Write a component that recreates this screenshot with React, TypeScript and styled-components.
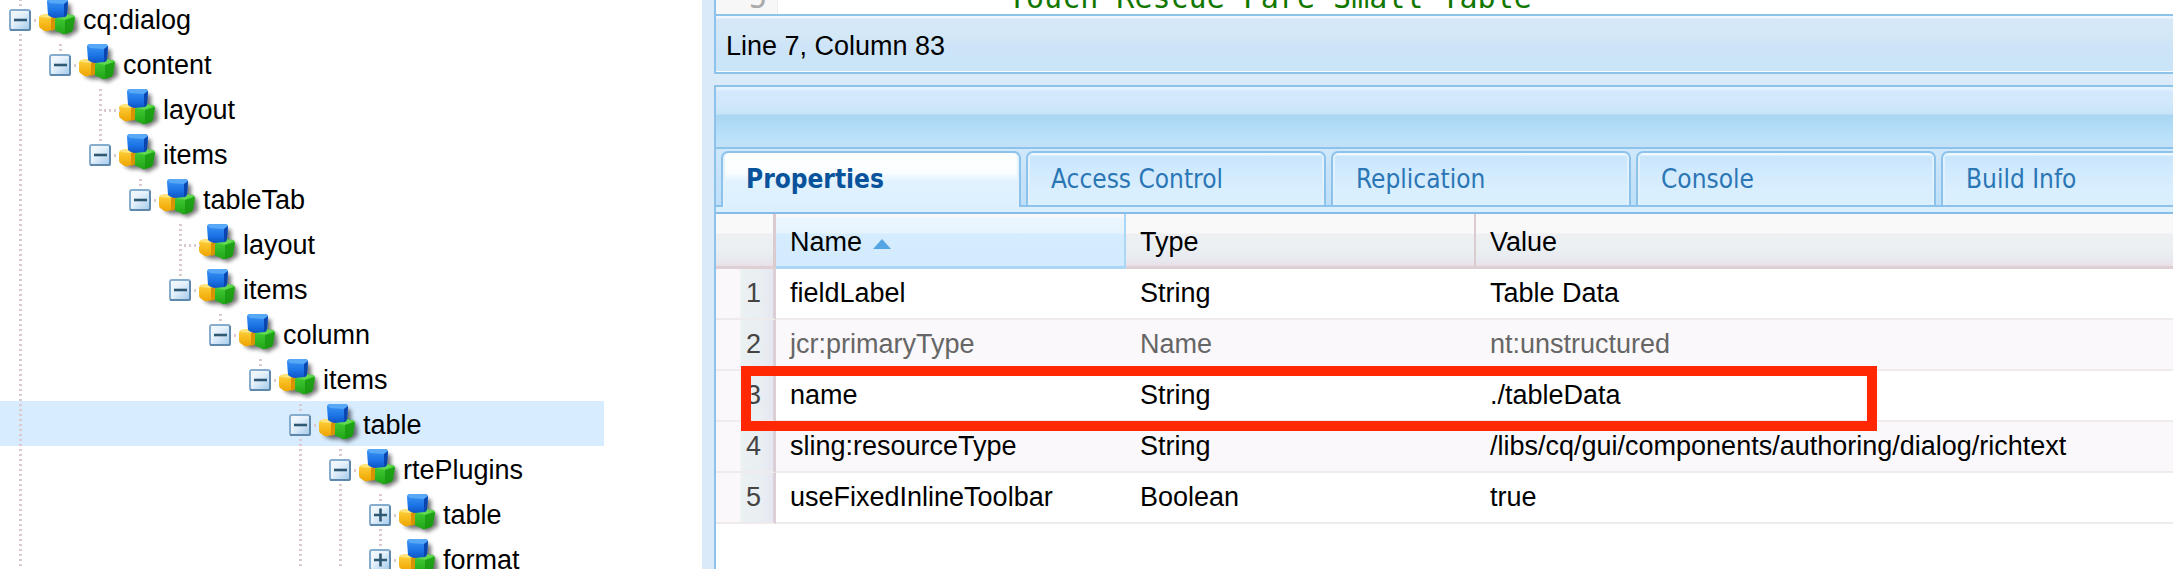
import React from "react";
import styled, { createGlobalStyle, css } from "styled-components";

const sans = '"Liberation Sans", Arial, Helvetica, sans-serif';
const tabFont = '"DejaVu Sans Condensed", "DejaVu Sans", Tahoma, sans-serif';
const mono = '"DejaVu Sans Mono", Menlo, monospace';
const frame = "#8dc2ea";

const GlobalStyle = createGlobalStyle`
  * { box-sizing: border-box; }
  html, body { margin: 0; background: #fff; }
  body { font-family: ${sans}; font-size: 27px; color: #000; }
`;

const Page = styled.div`
  display: flex;
  height: 100vh;
  overflow: hidden;
`;

/* ---------- Repository tree ---------- */

const TreePanel = styled.nav`
  flex: none;
  width: 702px;
  overflow: hidden;
`;

const Tree = styled.ul`
  list-style: none;
  margin: -4px 98px 0 0;
  padding: 0;
`;

const TreeRow = styled.li<{ $selected?: boolean }>`
  display: flex;
  height: 45px;
  background: ${(p) => (p.$selected ? "#d7ecfe" : "transparent")};
`;

const GuideCell = styled.span`
  position: relative;
  flex: none;
  display: flex;
  align-items: center;
  justify-content: center;
  width: 40px;
  height: 45px;
  padding-top: 3px;
`;

const GuideLines = styled.svg`
  position: absolute;
  inset: 0;
`;

const Toggle = styled.button`
  position: relative;
  display: block;
  width: 24px;
  height: 24px;
  padding: 0;
  border: 0;
  background: none;

  svg { display: block; }
`;

const NodeIcon = styled.svg`
  flex: none;
  margin-top: 3px;
`;

const NodeLabel = styled.span`
  line-height: 45px;
  padding-top: 2px;
  height: 45px;
  white-space: nowrap;
`;

type Guide = "blank" | "line";

interface TreeNode {
  label: string;
  guides: Guide[];
  toggle?: "minus" | "plus";
  last?: boolean;
  selected?: boolean;
}

const line = "line" as const;
const blank = "blank" as const;

const nodes: TreeNode[] = [
  { label: "cq:dialog", guides: [], toggle: "minus" },
  { label: "content", guides: [line], toggle: "minus", last: true },
  { label: "layout", guides: [line, blank] },
  { label: "items", guides: [line, blank], toggle: "minus", last: true },
  { label: "tableTab", guides: [line, blank, blank], toggle: "minus", last: true },
  { label: "layout", guides: [line, blank, blank, blank] },
  { label: "items", guides: [line, blank, blank, blank], toggle: "minus", last: true },
  { label: "column", guides: [line, blank, blank, blank, blank], toggle: "minus", last: true },
  { label: "items", guides: [line, blank, blank, blank, blank, blank], toggle: "minus", last: true },
  {
    label: "table",
    guides: [line, blank, blank, blank, blank, blank, blank],
    toggle: "minus",
    selected: true,
  },
  { label: "rtePlugins", guides: [line, blank, blank, blank, blank, blank, blank, line], toggle: "minus" },
  { label: "table", guides: [line, blank, blank, blank, blank, blank, blank, line, line], toggle: "plus" },
  { label: "format", guides: [line, blank, blank, blank, blank, blank, blank, line, line], toggle: "plus" },
];

const Dots = ({ d }: { d: string }) => (
  <path d={d} stroke="#dcc9cd" strokeWidth="3" strokeDasharray="2 3" fill="none" />
);

const Connector = ({ kind }: { kind: Guide }) => (
  <GuideCell>
    {kind === "line" && (
      <GuideLines width="40" height="45" viewBox="0 0 40 45" aria-hidden="true">
        <Dots d="M20.5 3V45" />
      </GuideLines>
    )}
  </GuideCell>
);

const Elbow = ({ node }: { node: TreeNode }) => (
  <GuideCell>
    <GuideLines width="40" height="45" viewBox="0 0 40 45" aria-hidden="true">
      <Dots d={node.last ? "M20.5 3V13" : "M20.5 3V45"} />
      <Dots d={node.toggle ? "M34 24.5H37" : "M24 24.5H40"} />
    </GuideLines>
    {node.toggle && (
      <Toggle type="button" aria-label={node.toggle === "minus" ? "Collapse" : "Expand"}>
        <svg width="24" height="24" viewBox="0 0 24 24">
          <rect x="2" y="2" width="20" height="20" rx="2" fill="url(#toggleFace)" stroke="#86acce" strokeWidth="2" />
          <path d="M2 22H21Q22 22 22 20.5V3" fill="none" stroke="#5f88ad" strokeWidth="2" />
          <path d="M4 4.5H20M4.5 4V20" stroke="#ecf5fc" strokeWidth="1" />
          <path d={node.toggle === "plus" ? "M6 12H19M12.5 5.5V18.5" : "M6 12H19"} stroke="#2f5873" strokeWidth="2.6" />
        </svg>
      </Toggle>
    )}
  </GuideCell>
);

const CubesIcon = () => (
  <NodeIcon width="43" height="41" viewBox="0 0 43 41" overflow="visible" aria-hidden="true">
    <path d="M24 4L31 6V17L37 20L38 32L28 38L20 35L11 35L4 32L12 20Z" fill="#000" opacity=".55" filter="url(#cubeShadow)" />
    <path d="M-1 19Q-1 17 1 16L5 15L14 16Q16 17 16 19V29Q15 31 12 31L8 32Q5 33 3 31L0 29Q-1 28 -1 26Z" fill="url(#goldSide)" />
    <path d="M0 17L5 15L14 16L10 19L1 18Z" fill="#ffe47c" />
    <path d="M11 19L16 17V29Q15 31 11 32Z" fill="#d99200" />
    <path d="M15 21Q15 19 17 18L26 15L33 16Q35 17 35 19L33 30Q33 32 31 33L25 35Q23 36 21 34L16 32Q14 31 15 29Z" fill="url(#greenSide)" />
    <path d="M16 19L25 15L34 17L25 21Z" fill="#62d84f" />
    <path d="M25 21L35 18L33 30Q33 32 31 33L25 35Z" fill="#17950f" opacity=".75" />
    <path d="M7 3Q7 0 10 0H25Q28 0 28 3L27 15Q27 17 25 18L14 19Q10 18 8 16Z" fill="url(#blueSide)" />
    <path d="M8 2Q9 0 11 0H25Q27 0 28 2L24 5L10 4Z" fill="#58a8f8" />
    <path d="M24 5L28 2L27 15Q27 17 24 18Z" fill="#0b46b0" />
  </NodeIcon>
);

const Paints = styled.svg`
  position: absolute;
`;

const IconPaints = () => (
  <Paints width="0" height="0" aria-hidden="true">
    <defs>
      <linearGradient id="toggleFace" x1="0" y1="0" x2="1" y2="1">
        <stop offset="0" stopColor="#ffffff" />
        <stop offset=".5" stopColor="#dcecf9" />
        <stop offset="1" stopColor="#a3c9ea" />
      </linearGradient>
      <linearGradient id="blueSide" x1="0" y1="0" x2="0" y2="1">
        <stop offset="0" stopColor="#3d96f4" />
        <stop offset=".6" stopColor="#1c74e6" />
        <stop offset="1" stopColor="#0c55c6" />
      </linearGradient>
      <linearGradient id="goldSide" x1="0" y1="0" x2="0" y2="1">
        <stop offset="0" stopColor="#ffd440" />
        <stop offset="1" stopColor="#eea400" />
      </linearGradient>
      <linearGradient id="greenSide" x1="0" y1="0" x2="0" y2="1">
        <stop offset="0" stopColor="#48d03a" />
        <stop offset="1" stopColor="#1fa516" />
      </linearGradient>
      <filter id="cubeShadow" x="-30%" y="-30%" width="160%" height="160%">
        <feGaussianBlur stdDeviation="2" />
      </filter>
    </defs>
  </Paints>
);

/* ---------- Right side panels ---------- */

const Workspace = styled.main`
  flex: 1;
  min-width: 0;
  display: flex;
  flex-direction: column;
  gap: 11px;
  padding-left: 12px;
  background: #dbeaf9;
`;

const EditorPanel = styled.section`
  flex: none;
  border-left: 2px solid ${frame};
  border-bottom: 2px solid ${frame};
  background: #fff;
`;

const CodeLine = styled.div`
  display: flex;
  align-items: flex-end;
  height: 14px;
  overflow: hidden;
  font-family: ${mono};
  font-size: 30px;
  line-height: 32px;
  white-space: pre;
`;

const Gutter = styled.span`
  flex: none;
  width: 62px;
  padding-right: 10px;
  border-right: 1px solid #eee;
  background: #f7f7f7;
  color: #aaa;
  text-align: right;
`;

const Code = styled.code`
  padding-left: 230px;
  font-family: inherit;
  color: #170;
`;

const StatusBar = styled.div`
  height: 58px;
  padding: 3px 10px 0;
  border-top: 2px solid ${frame};
  border-bottom: 1px solid #f7fbfe;
  background: linear-gradient(#eef6fd 0, #eef6fd 2px, #d6e7f7 3px, #d3e8f6 20px, #cee4f8 30px, #c9e5f7 100%);
  line-height: 54px;
`;

const PropertiesPanel = styled.section`
  flex: 1;
  min-height: 0;
  border-left: 2px solid ${frame};
  border-top: 2px solid ${frame};
  background: #fff;
`;

const Toolbar = styled.div`
  height: 60px;
  background: linear-gradient(
    #e4f2fd 0, #e4f2fd 2px, #d5e8fd 4px, #d2e8fb 14px, #c7e5f8 27px,
    #abd6f3 28px, #add9f4 34px, #b6dff9 46px, #bde2f9 54px, #c3e0f8 100%
  );
`;

const TabStrip = styled.div`
  display: flex;
  gap: 5px;
  height: 60px;
  padding: 2px 0 0 5px;
  border-top: 2px solid ${frame};
  background: linear-gradient(#cfe8fb 0, #c9e3f8 20px, #bfe0fa 56px, ${frame} 56px, ${frame} 100%);
  overflow: hidden;
`;

const Tab = styled.button<{ $active?: boolean }>`
  flex: none;
  width: 300px;
  height: 56px;
  padding: 0 23px;
  border: 2px solid ${frame};
  border-radius: 7px 7px 0 0;
  background: linear-gradient(#eef8ff 0, #eef8ff 2px, #c9e6fd 3px, #d9eefe 34px, #dbf0fe 100%);
  box-shadow: inset 2px 0 #e1f2fe, inset -2px 0 #e1f2fe;
  color: #2b76b5;
  font: 26px/46px ${tabFont};
  text-align: left;

  ${(p) =>
    p.$active &&
    css`
      padding-bottom: 2px;
      border-bottom: 0;
      background: linear-gradient(#fff 0, #fafdff 20px, #e2f2fe 28px, #dbf0fe 100%);
      color: #08539b;
      font-weight: bold;
    `}
`;

const TabFoot = styled.div`
  height: 7px;
  border-bottom: 2px solid #86bce7;
  background: #dbf0fe;
`;

const Grid = styled.table`
  width: 100%;
  border-collapse: separate;
  border-spacing: 0;
  table-layout: fixed;

  col.number { width: 60px; }
  col.field { width: 350px; }
`;

const headerPaint = "linear-gradient(#faf9fa 0, #faf9fa 19px, #eeeff3 20px, #eaf0f2 34px, #e8e9f0 46px, #e9dfe6 100%)";

const HeadCell = styled.th<{ $sorted?: boolean }>`
  height: 55px;
  padding: 4px 14px 0;
  border-right: 2px solid ${(p) => (p.$sorted ? "#a9d7f5" : "#dacbce")};
  border-bottom: 3px solid ${(p) => (p.$sorted ? "#a9d7f5" : "#decfd4")};
  background: ${(p) =>
    p.$sorted ? "linear-gradient(#faf9fa 0, #faf9fa 3px, #ebf6fe 3px, #e6f4fe 19px, #d5ecfe 20px, #d3ebfe 100%)" : headerPaint};
  font-weight: normal;
  line-height: 48px;
  text-align: left;

  &:first-child { border-right-width: 3px; }
  &:last-child { border-right: 0; }
`;

const SortMark = styled.svg`
  margin: 0 0 2px 11px;
`;

const BodyRow = styled.tr<{ $muted?: boolean }>`
  position: relative;
  color: ${(p) => (p.$muted ? "#666" : "#000")};

  &:nth-child(even) { background: #faf8fa; }
`;

const BodyCell = styled.td`
  height: 51px;
  padding: 0 14px;
  border-bottom: 2px solid #efebed;
  line-height: 49px;
  white-space: nowrap;
`;

const NumberCell = styled(BodyCell)`
  padding: 0 12px 0 0;
  border-right: 3px solid #dacfd4;
  background: linear-gradient(90deg, #faf8fa 0, #faf8fa 24px, #ebf0f3 25px, #e9eef2 45px, #e6e7f2 100%);
  color: #444;
  text-align: right;
`;

const RedFrame = styled.span`
  position: absolute;
  z-index: 1;
  top: -5px;
  bottom: -9px;
  left: 25px;
  width: 78%;
  border: 10px solid #ff2803;
  pointer-events: none;
`;

interface Property {
  name: string;
  type: string;
  value: string;
  muted?: boolean;
  marked?: boolean;
}

const properties: Property[] = [
  { name: "fieldLabel", type: "String", value: "Table Data" },
  { name: "jcr:primaryType", type: "Name", value: "nt:unstructured", muted: true },
  { name: "name", type: "String", value: "./tableData", marked: true },
  { name: "sling:resourceType", type: "String", value: "/libs/cq/gui/components/authoring/dialog/richtext" },
  { name: "useFixedInlineToolbar", type: "Boolean", value: "true" },
];

const tabs = ["Properties", "Access Control", "Replication", "Console", "Build Info"];

export default function App() {
  return (
    <Page>
      <GlobalStyle />
      <IconPaints />
      <TreePanel aria-label="Repository">
        <Tree>
          {nodes.map((node, i) => (
            <TreeRow key={i} $selected={node.selected}>
              {node.guides.map((kind, g) => (
                <Connector key={g} kind={kind} />
              ))}
              <Elbow node={node} />
              <CubesIcon />
              <NodeLabel>{node.label}</NodeLabel>
            </TreeRow>
          ))}
        </Tree>
      </TreePanel>
      <Workspace>
        <EditorPanel>
          <CodeLine>
            <Gutter>5</Gutter>
            <Code>Touch Rescue Fare Small Table</Code>
          </CodeLine>
          <StatusBar>Line 7, Column 83</StatusBar>
        </EditorPanel>
        <PropertiesPanel>
          <Toolbar />
          <TabStrip role="tablist">
            {tabs.map((label, i) => (
              <Tab key={label} type="button" role="tab" aria-selected={i === 0} $active={i === 0}>
                {label}
              </Tab>
            ))}
          </TabStrip>
          <TabFoot />
          <Grid>
            <colgroup>
              <col className="number" />
              <col className="field" />
              <col className="field" />
              <col />
            </colgroup>
            <thead>
              <tr>
                <HeadCell aria-label="Row" />
                <HeadCell $sorted aria-sort="ascending">
                  Name
                  <SortMark width="18" height="10" viewBox="0 0 18 10" aria-hidden="true">
                    <path d="M9 0L18 10H0Z" fill="#55a5e2" />
                  </SortMark>
                </HeadCell>
                <HeadCell>Type</HeadCell>
                <HeadCell>Value</HeadCell>
              </tr>
            </thead>
            <tbody>
              {properties.map((p, i) => (
                <BodyRow key={p.name} $muted={p.muted}>
                  <NumberCell>
                    {i + 1}
                    {p.marked && <RedFrame />}
                  </NumberCell>
                  <BodyCell>{p.name}</BodyCell>
                  <BodyCell>{p.type}</BodyCell>
                  <BodyCell>{p.value}</BodyCell>
                </BodyRow>
              ))}
            </tbody>
          </Grid>
        </PropertiesPanel>
      </Workspace>
    </Page>
  );
}
